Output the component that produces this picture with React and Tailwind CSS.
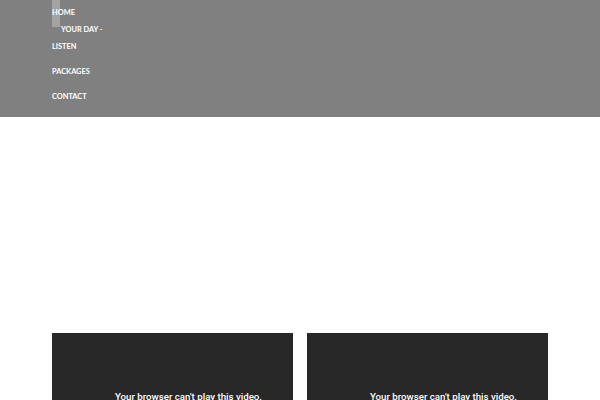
export default function App() {
  const links = [
    { name: 'HOME', cls: 'h-[17px]' },
    { name: 'YOUR DAY -', cls: 'h-[17px] pl-[9px]' },
    { name: 'LISTEN', cls: 'h-[17px]' },
    { name: 'PACKAGES', cls: 'h-[17px] mt-[8px]' },
    { name: 'CONTACT', cls: 'h-[17px] mt-[8px]' },
  ]

  return (
    <div className="w-[600px] h-[400px] overflow-hidden bg-white" style={{ fontFamily: 'Lato, sans-serif' }}>
      {/* header */}
      <header className="relative h-[117px] bg-[#808080]">
        <div className="absolute left-[52px] top-0 w-[8px] h-[27px] bg-[#a3a3a3]" />
        <nav className="relative flex flex-col pt-[4px] pl-[52px]">
          {links.map((link) => (
            <a key={link.name} className={`flex items-center text-[7.4px] font-bold text-white ${link.cls}`}>
              {link.name}
            </a>
          ))}
        </nav>
      </header>

      {/* videos */}
      <div className="flex gap-[14px] px-[52px] mt-[216px]">
        {[0, 1].map((i) => (
          <div key={i} className="flex-1 h-[120px] bg-[#282828] pt-[57px] pl-[32px] text-center">
            <p className="text-[9.7px] font-medium text-white" style={{ fontFamily: 'Roboto, sans-serif' }}>
              Your browser can't play this video.
            </p>
          </div>
        ))}
      </div>
    </div>
  )
}
